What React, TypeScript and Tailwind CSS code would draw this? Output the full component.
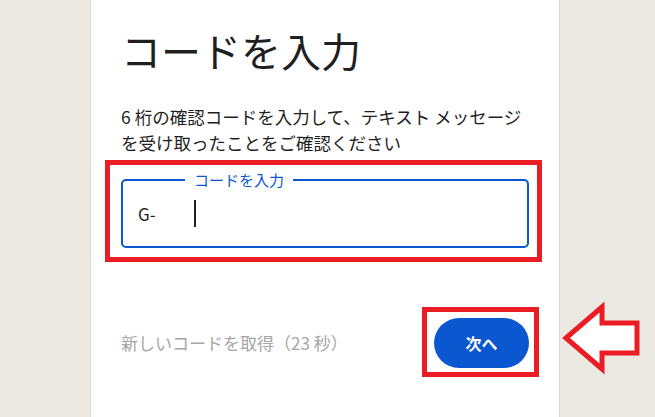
import React from "react";

const font = { fontFamily: '"Noto Sans CJK JP", "Noto Sans", sans-serif' };

function RedBox({ className }: { className: string }) {
    return <div className={`pointer-events-none absolute border-[5px] border-[#ec1c24] ${className}`} />;
}

export default function App() {
    return (
        <div className="relative h-[417px] w-[655px] overflow-hidden bg-[#ece8e2]" style={font}>
            <div className="ml-[90px] h-full w-[470px] border-x border-[#dddad5] bg-white px-[30px] pt-[26px]">
                <h1 className="text-[40px] leading-[48px] text-[#1f1f1f]">コードを入力</h1>

                <p className="mt-[30px] whitespace-nowrap text-[17.5px] leading-[26px] text-[#1f1f1f]">
                    6 桁の確認コードを入力して、テキスト メッセージ
                    <br />
                    を受け取ったことをご確認ください
                </p>

                {/* input with annotation */}
                <div className="relative mt-[23px]">
                    <RedBox className="-left-[16px] -right-[13px] -top-[19px] -bottom-[14px]" />
                    <div className="relative flex h-[69px] items-center rounded-[5px] border-2 border-[#0b57d0] pl-[15px]">
                        <span className="absolute -top-[12px] left-[62px] bg-white px-[9px] text-[15px] leading-[22px] text-[#0b57d0]">
                            コードを入力
                        </span>
                        <span className="text-[17px] text-[#1f1f1f]">G-</span>
                        <span className="ml-[38px] h-[27px] w-[2px] bg-[#1f1f1f]" />
                    </div>
                </div>

                <div className="mt-[70px] flex items-center justify-between">
                    <span className="text-[17px] text-[#a6a6a6]">新しいコードを取得（23 秒）</span>
                    <div className="relative">
                        <RedBox className="-left-[12px] -right-[10px] -top-[11px] -bottom-[9px]" />
                        <button className="h-[50px] w-[95px] rounded-full bg-[#0b57d0] text-[16px] font-bold text-white">
                            次へ
                        </button>
                    </div>
                </div>
            </div>

            {/* arrow annotation */}
            <svg className="absolute left-[560px] top-[300px]" width="85" height="75" viewBox="0 0 85 75">
                <polygon
                    points="6,38 42,7 42,23 77,23 77,53 42,53 42,69"
                    fill="#ffffff"
                    stroke="#ec1c24"
                    strokeWidth="5"
                    strokeLinejoin="miter"
                />
            </svg>
        </div>
    );
}
